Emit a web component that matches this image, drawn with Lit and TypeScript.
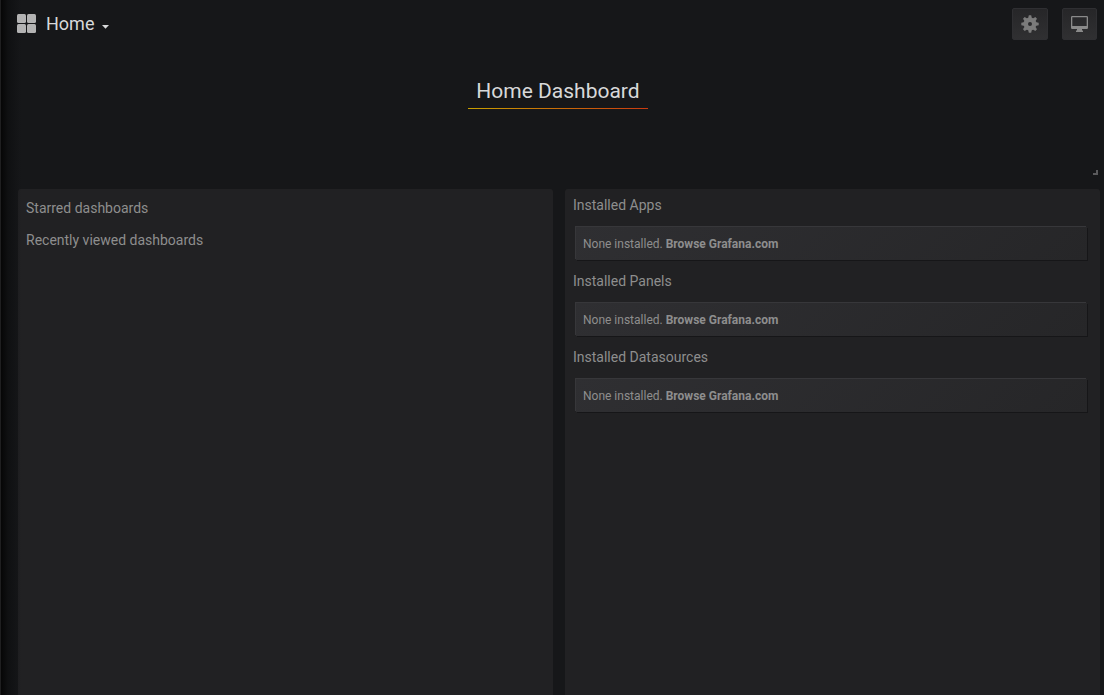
import { LitElement, html, css, svg } from "lit";
import { customElement, property } from "lit/decorators.js";

const gearTeeth = [0, 45, 90, 135, 180, 225, 270, 315];

@customElement("plugin-section")
class PluginSection extends LitElement {
  @property() heading = "";

  static styles = css`
    :host {
      display: block;
    }
    .heading {
      margin: 0;
      font-size: 14px;
      font-weight: 400;
      line-height: 20px;
      color: #8e8e8e;
    }
    .item {
      margin: 12px 5px 0 3px;
      padding: 8px 7px 7px;
      font-size: 12px;
      line-height: 18px;
      color: #8e8e8e;
      background: linear-gradient(135deg, #2f2f32, #262628);
      box-shadow: -1px -1px 0 0 #37373a, 1px 1px 0 0 #161618;
    }
    .item a {
      color: inherit;
      font-weight: 700;
      text-decoration: none;
    }
  `;

  render() {
    return html`
      <h2 class="heading">${this.heading}</h2>
      <div class="item">None installed. <a href="#plugins">Browse Grafana.com</a></div>
    `;
  }
}

@customElement("app-root")
class AppRoot extends LitElement {
  static styles = css`
    :host {
      display: flex;
      flex-direction: column;
      box-sizing: border-box;
      height: 100vh;
      overflow: hidden;
      position: relative;
      background: #161719;
      color: #d8d9da;
      font-family: Roboto, sans-serif;
    }
    .edge {
      position: absolute;
      inset: 0 auto 0 0;
      width: 20px;
      border-left: 1px solid #1f1f20;
      background: linear-gradient(90deg, #060606, rgba(11, 12, 13, 0.6) 35%, rgba(22, 23, 25, 0));
      pointer-events: none;
    }
    .navbar {
      position: relative;
      display: flex;
      align-items: center;
      justify-content: space-between;
      height: 48px;
      padding: 0 7px 0 17px;
    }
    button {
      margin: 0;
      padding: 0;
      border: 0;
      background: none;
      color: inherit;
      font: inherit;
      cursor: pointer;
    }
    .picker {
      display: flex;
      align-items: center;
      font-size: 18px;
      line-height: 24px;
    }
    .picker .grid {
      margin-right: 10px;
    }
    .picker .caret {
      margin: 5px 0 0 8px;
    }
    .actions {
      display: flex;
      gap: 14px;
    }
    .action {
      display: flex;
      align-items: center;
      justify-content: center;
      height: 32px;
      padding: 0 8px;
      border: 1px solid #2f2f32;
      border-radius: 2px;
      background: linear-gradient(#262628, #303032);
      color: #7b7b7b;
    }
    .action.view {
      color: #8a8a8a;
    }
    svg {
      display: block;
    }
    .banner {
      position: relative;
      display: flex;
      justify-content: center;
      align-items: flex-start;
      height: 117px;
      margin: 12px 6px 12px 18px;
      padding-top: 12px;
      box-sizing: border-box;
    }
    .title {
      margin: 0;
      padding: 7px 8px 4px;
      border-bottom: 1px solid;
      border-image: linear-gradient(90deg, #c8a000, #c83a10) 1;
      font-size: 21px;
      font-weight: 400;
      line-height: 25px;
    }
    .resize {
      position: absolute;
      right: 0;
      bottom: 2px;
      width: 3px;
      height: 3px;
      border-right: 2px solid #5a5a5c;
      border-bottom: 2px solid #5a5a5c;
    }
    .panels {
      flex: 1;
      display: grid;
      grid-template-columns: 1fr 1fr;
      gap: 12px;
      padding: 0 4px 0 18px;
    }
    .panel {
      padding: 6px 8px;
      border-radius: 3px 3px 0 0;
      background: #212123;
    }
    .lists {
      padding-top: 9px;
    }
    .list-title {
      margin: 0 0 12px;
      font-size: 14px;
      font-weight: 400;
      line-height: 20px;
      color: #8e8e8e;
    }
    .plugins {
      display: flex;
      flex-direction: column;
      gap: 11px;
    }
  `;

  render() {
    return html`
      <div class="edge"></div>
      <header class="navbar">
        <button class="picker" aria-label="Home, choose dashboard">
          <svg class="grid" width="19" height="20" viewBox="0 0 19 20" fill="#b3b3b3">
            <rect width="9" height="9" rx="1.5" />
            <rect x="10" width="9" height="9" rx="1.5" />
            <rect y="10" width="9" height="9" rx="1.5" />
            <rect x="10" y="10" width="9" height="9" rx="1.5" />
          </svg>
          <span>Home</span>
          <svg class="caret" width="7" height="4" viewBox="0 0 7 4" fill="currentColor">
            <path d="M0 0h7L3.500 3.800z" />
          </svg>
        </button>
        <div class="actions">
          <button class="action" aria-label="Settings">
            <svg width="18" height="18" viewBox="0 0 18 18" fill="currentColor">
              <path
                fill-rule="evenodd"
                d="M9 2.500a6.500 6.500 0 1 0 0 13a6.500 6.500 0 1 0 0-13zM9 7a2 2 0 1 1 0 4a2 2 0 1 1 0-4z"
              />
              ${gearTeeth.map(
                (a) => svg`<path transform="rotate(${a} 9 9)" d="M7 4L7.800 .3h2.400L11 4z" />`
              )}
            </svg>
          </button>
          <button class="action view" aria-label="Cycle view mode">
            <svg width="17" height="16" viewBox="0 0 17 16" fill="currentColor">
              <path
                fill-rule="evenodd"
                d="M1.200 0h14.600Q17 0 17 1.200v10.600Q17 13 15.800 13H11v1.500H12V16h-7v-1.500H6V13H1.200Q0 13 0 11.800V1.200Q0 0 1.200 0zM1.300 1.300v8.700h14.400V1.300z"
              />
            </svg>
          </button>
        </div>
      </header>
      <section class="banner">
        <h1 class="title">Home Dashboard</h1>
        <span class="resize"></span>
      </section>
      <main class="panels">
        <section class="panel lists">
          <h2 class="list-title">Starred dashboards</h2>
          <h2 class="list-title">Recently viewed dashboards</h2>
        </section>
        <section class="panel plugins">
          <plugin-section heading="Installed Apps"></plugin-section>
          <plugin-section heading="Installed Panels"></plugin-section>
          <plugin-section heading="Installed Datasources"></plugin-section>
        </section>
      </main>
    `;
  }
}
